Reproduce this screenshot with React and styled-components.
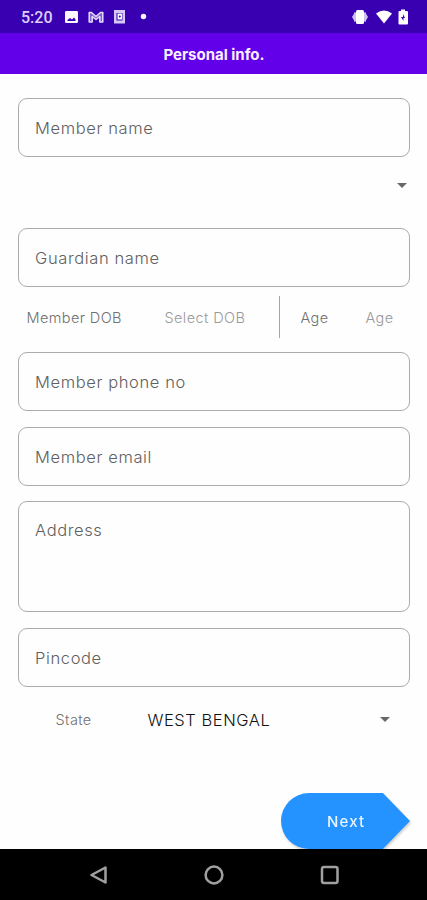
import styled, { createGlobalStyle } from "styled-components"

export default function App() {
    return (
        <>
            <GlobalStyle />
            <Screen>
                <StatusBar>
                    <Clock>5:20</Clock>
                    <NotificationIcons />
                    <SystemIcons />
                </StatusBar>
                <Header>Personal info.</Header>
                <Form>
                    <Field>Member name</Field>
                    <RelationSelect>
                        <Arrow />
                    </RelationSelect>
                    <Field>Guardian name</Field>
                    <DobRow>
                        <Label>Member DOB</Label>
                        <Value>Select DOB</Value>
                        <Divider />
                        <Label>Age</Label>
                        <Value>Age</Value>
                    </DobRow>
                    <FieldList>
                        <Field>Member phone no</Field>
                        <Field>Member email</Field>
                        <Field $height="111px" $top="16px">Address</Field>
                        <Field>Pincode</Field>
                    </FieldList>
                    <StateRow>
                        <Label>State</Label>
                        <StateValue>WEST BENGAL</StateValue>
                        <Arrow />
                    </StateRow>
                </Form>
                <Footer>
                    <NextButton>
                        <span>Next</span>
                    </NextButton>
                </Footer>
                <NavigationBar>
                    <NavIcon viewBox="0 0 24 24">
                        <path d="M19.5 4.500v15L5.500 12z" />
                    </NavIcon>
                    <NavIcon viewBox="0 0 24 24">
                        <circle cx="12" cy="12" r="8.400" />
                    </NavIcon>
                    <NavIcon viewBox="0 0 24 24">
                        <rect x="4" y="4" width="15.500" height="16" rx="2" />
                    </NavIcon>
                </NavigationBar>
            </Screen>
        </>
    )
}

function Arrow() {
    return (
        <ArrowIcon viewBox="0 0 10 5">
            <path d="M0 0h10L5 5z" />
        </ArrowIcon>
    )
}

function NotificationIcons() {
    return (
        <Notifications viewBox="0 0 84 16">
            <path fillRule="evenodd" d="M2.200 2h10.600q1.200 0 1.200 1.200v9.600q0 1.200-1.200 1.200H2.200Q1 14 1 12.800V3.200Q1 2 2.200 2zM3.500 12h8V10.500L10 8.500 8 10.500 6 9 3.500 11z" />
            <path d="M25.200 13V3.500h2.300L32 7.500l4.500-4h2.300V13h-3V7.500L32 10.500l-3.800-3V13z" fill="#8060d0" stroke="#e6dcff" strokeWidth="1.500" strokeLinejoin="round" />
            <path fill="#d5c8f5" fillRule="evenodd" d="M50 1h11v13.500H50zM52.500 4v7.500h6V4z" />
            <path d="M53.500 4.500h4.500v6h-4.500z" />
            <circle cx="55.800" cy="7.500" r="1" fill="#3900b1" />
            <circle cx="79.500" cy="7.500" r="2.700" />
        </Notifications>
    )
}

function SystemIcons() {
    return (
        <System viewBox="0 0 58 16">
            <path fill="#cfc0f3" d="M1 8l3-5v10zM17 8l-3-5v10z" />
            <path fill="#cfc0f3" d="M3 3.500h12v9H3z" />
            <rect x="5" y="1" width="8" height="14" rx="1.500" />
            <path d="M25 4.500Q33 -1.500 41 4.500L33 14.500z" />
            <path fillRule="evenodd" d="M50 .5h4V2h2q1 0 1 1v11.500q0 1-1 1h-7.500q-1 0-1-1V3q0-1 1-1H50zM52 5v3h-2l2.500 4V9H54z" />
        </System>
    )
}

const GlobalStyle = createGlobalStyle`
    * {
        box-sizing: border-box;
    }
    body {
        margin: 0;
        background: #FFFFFF;
        font-family: Inter, sans-serif;
    }
`

const Screen = styled.div`
    display: flex;
    flex-direction: column;
    width: 427px;
    height: 900px;
    overflow: hidden;
    background: #FEFEFE;
`

const StatusBar = styled.header`
    display: flex;
    align-items: center;
    height: 33px;
    padding: 0 18px 0 21px;
    background: #3900B1;
`

const Clock = styled.span`
    width: 43px;
    font-family: Roboto, sans-serif;
    font-size: 16px;
    font-weight: 500;
    line-height: 20px;
    padding-top: 2px;
    color: #DCD0FA;
`

const Notifications = styled.svg`
    width: 84px;
    height: 16px;
    margin-top: 1px;
    fill: #FAF7FF;
`

const System = styled.svg`
    width: 58px;
    height: 16px;
    margin-left: auto;
    fill: #FFFFFF;
`

const Header = styled.h1`
    display: flex;
    align-items: center;
    justify-content: center;
    height: 41px;
    margin: 0;
    padding: 2px 0 0 1px;
    background: #6200EA;
    color: #F8F0FF;
    font-size: 15px;
    font-weight: 700;
`

const Form = styled.main`
    display: flex;
    flex-direction: column;
    padding: 24px 17px 0 18px;
`

const Field = styled.div`
    height: ${({ $height }) => $height || '59px'};
    padding: ${({ $top }) => $top || '17px'} 16px 0;
    border: 1px solid #ABABAB;
    border-radius: 9px;
    font-size: 16.500px;
    font-weight: 300;
    line-height: 24px;
    letter-spacing: 0.62px;
    color: #606060;
`

const RelationSelect = styled.div`
    display: flex;
    align-items: center;
    justify-content: flex-end;
    height: 71px;
    padding: 0 3px 14px 0;
`

const ArrowIcon = styled.svg`
    width: 10px;
    height: 5px;
    fill: #686868;
`

const DobRow = styled.div`
    display: grid;
    grid-template-columns: 138px 114px 22px 65px 1fr;
    align-items: center;
    height: 65px;
    padding: 0 0 5px 8.500px;
`

const Label = styled.span`
    font-size: 14.500px;
    font-weight: 300;
    letter-spacing: 0.4px;
    color: #707070;
`

const Value = styled(Label)`
    color: #999999;
`

const Divider = styled.span`
    width: 1px;
    height: 42px;
    background: #A5A5A5;
`

const FieldList = styled.div`
    display: flex;
    flex-direction: column;
    gap: 15.500px;
`

const StateRow = styled.div`
    display: grid;
    grid-template-columns: 92px 1fr 10px;
    align-items: center;
    height: 66px;
    padding: 0 20px 0 37.500px;
`

const StateValue = styled.span`
    font-size: 16.500px;
    font-weight: 300;
    letter-spacing: 0.55px;
    color: #111111;
`

const Footer = styled.footer`
    display: flex;
    justify-content: flex-end;
    margin-top: auto;
    padding-right: 17px;
`

const NextButton = styled.button`
    width: 129px;
    height: 56px;
    padding: 0;
    border: none;
    background: none;
    filter: drop-shadow(1px 2px 1px rgba(0, 0, 0, 0.18));
    > span {
        display: flex;
        align-items: center;
        width: 100%;
        height: 100%;
        padding-left: 46px;
        border-radius: 28px 0 0 28px;
        background: #2492FF;
        clip-path: polygon(0 0, 79% 0, 100% 50%, 79% 100%, 0 100%);
        color: #E9F4FF;
        font-family: Inter, sans-serif;
        font-size: 15px;
        font-weight: 500;
        letter-spacing: 1.2px;
    }
`

const NavigationBar = styled.nav`
    display: flex;
    align-items: center;
    justify-content: space-between;
    position: relative;
    height: 51px;
    padding: 0 85px 0 86px;
    background: #000000;
`

const NavIcon = styled.svg`
    width: 24px;
    height: 24px;
    fill: none;
    stroke: #A0A0A0;
    stroke-width: 2.500;
    stroke-linejoin: round;
`
